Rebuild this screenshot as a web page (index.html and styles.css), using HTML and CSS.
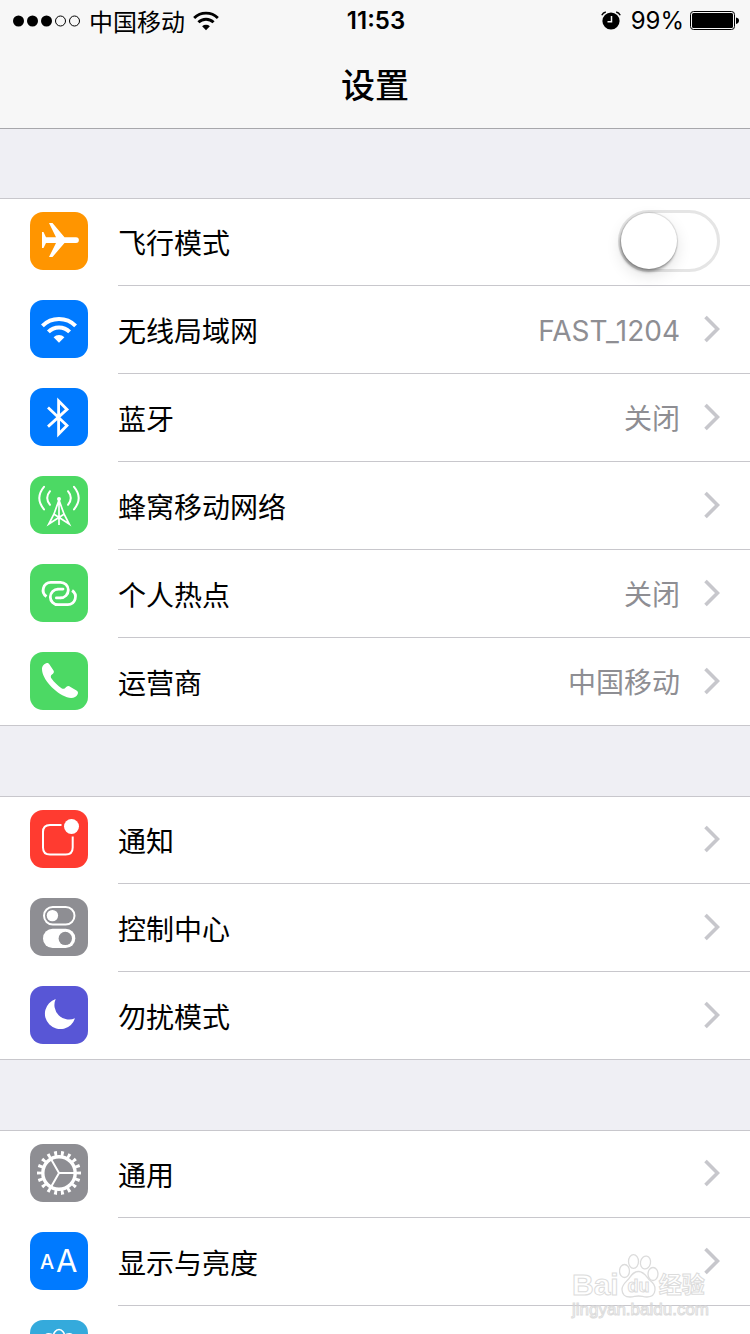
FILE: index.html
```html
<!DOCTYPE html>
<html lang="zh-CN">
<head>
<meta charset="utf-8">
<meta name="viewport" content="width=device-width, initial-scale=1">
<title>设置</title>
<link rel="stylesheet" href="styles.css">
</head>
<body>
<svg class="defs" aria-hidden="true">
  <symbol id="wifi" viewBox="11 16 36 28">
    <g fill="none" stroke="currentColor" stroke-width="4">
      <path d="M12.4 25.9a23.5 23.5 0 0 1 33.2 0"/>
      <path d="M18.4 31.9a15 15 0 0 1 21.2 0"/>
    </g>
    <path fill="currentColor" d="M29 42.8l-5.4-5.6a8 8 0 0 1 10.8 0z"/>
  </symbol>
  <symbol id="chevron" viewBox="0 0 16 28">
    <path d="M1.5 2L13.5 14L1.5 26" fill="none" stroke="currentColor" stroke-width="3.6"/>
  </symbol>
</svg>
<div class="screen">
  <header class="top">
    <div class="status">
      <div class="status-left">
        <svg width="68" height="12" viewBox="0 0 68 12" aria-hidden="true">
          <circle cx="5.5" cy="6" r="5.5"/><circle cx="19.5" cy="6" r="5.5"/><circle cx="33.5" cy="6" r="5.5"/>
          <circle class="ring" cx="47.5" cy="6" r="5"/><circle class="ring" cx="61.5" cy="6" r="5"/>
        </svg>
        <span class="carrier">中国移动</span>
        <svg width="26" height="20" aria-hidden="true"><use href="#wifi"/></svg>
      </div>
      <time class="clock">11:53</time>
      <div class="status-right">
        <svg class="alarm" width="20" height="19" viewBox="0 0 20 19" aria-hidden="true">
          <circle cx="10" cy="10" r="8.6"/>
          <path d="M.8 4.2Q2 1.6 4.8 1M19.2 4.2Q18 1.6 15.2 1" fill="none" stroke="#000" stroke-width="1.5"/>
          <path d="M10.5 5v5.8H6.500" fill="none" stroke="#f7f7f7" stroke-width="1.5"/>
        </svg>
        <span>99%</span>
        <svg width="49" height="20" viewBox="0 0 49 20" aria-hidden="true">
          <rect class="ring" x=".5" y=".5" width="44" height="18" rx="3"/>
          <rect x="2" y="2" width="41" height="15" rx="1.5"/>
          <path d="M46 6.5q3 .5 3 3t-3 3.500z"/>
        </svg>
      </div>
    </div>
    <h1 class="title">设置</h1>
  </header>

  <main class="groups">
    <ul class="group">
      <li class="row">
        <svg class="icon orange" viewBox="0 0 58 58" aria-hidden="true">
          <path fill="#fff" d="M12 20h1.500L16 25.200H26L19 11h3.500L34.500 25.200H46a2.800 2.800 0 0 1 0 5.800H34.500L22.500 45H19l7-14H16l-2.500 5H12z"/>
        </svg>
        <div class="body">
          <label class="label" for="airplane">飞行模式</label>
          <input class="switch" type="checkbox" role="switch" id="airplane">
        </div>
      </li>
      <li><a class="row" href="#">
        <svg class="icon blue" viewBox="0 0 58 58" aria-hidden="true"><use href="#wifi" x="11" y="16" width="36" height="28"/></svg>
        <span class="body"><span class="label">无线局域网</span><span class="value">FAST_1204</span><svg class="chevron" aria-hidden="true"><use href="#chevron"/></svg></span>
      </a></li>
      <li><a class="row" href="#">
        <svg class="icon blue" viewBox="0 0 58 58" aria-hidden="true">
          <path class="line" stroke-width="2.800" d="M18 19.600L37 37.500L28.600 46V13L37 21.400L18 38.600"/>
        </svg>
        <span class="body"><span class="label">蓝牙</span><span class="value">关闭</span><svg class="chevron" aria-hidden="true"><use href="#chevron"/></svg></span>
      </a></li>
      <li><a class="row" href="#">
        <svg class="icon green" viewBox="0 0 58 58" aria-hidden="true">
          <circle cx="29" cy="23" r="2" fill="#fff"/>
          <path class="line" stroke-width="1.700" d="M29 23V49M29 24L24 38L18.800 48L33.500 38.500M29 24L34 38L39.200 48L24.500 38.500"/>
          <path class="line round" stroke-width="2" d="M20 15.200q-5.600 6.800 0 13.600M38 15.200q5.600 6.800 0 13.600M14 10.800q-9.400 11.200 0 22.600M44 10.800q9.400 11.200 0 22.600"/>
        </svg>
        <span class="body"><span class="label">蜂窝移动网络</span><svg class="chevron" aria-hidden="true"><use href="#chevron"/></svg></span>
      </a></li>
      <li><a class="row" href="#">
        <svg class="icon green" viewBox="0 0 58 58" aria-hidden="true">
          <path class="line" stroke-width="2.800" d="M16.500 32.500A7.800 7.800 0 0 1 20.800 18.300H30.500a7.800 7.800 0 0 1 0 15.600"/>
          <path class="line" stroke-width="2.800" d="M42.100 26.500A7.800 7.800 0 0 1 37.800 40.700H28.100a7.800 7.800 0 0 1 0-15.600"/>
          <path class="line round" stroke-width="2.800" d="M30.500 33.900H26.400M28.100 25.100H33"/>
        </svg>
        <span class="body"><span class="label">个人热点</span><span class="value">关闭</span><svg class="chevron" aria-hidden="true"><use href="#chevron"/></svg></span>
      </a></li>
      <li><a class="row" href="#">
        <svg class="icon green" viewBox="0 0 58 58" aria-hidden="true">
          <path fill="#fff" d="M12 17C12 13.500 14.500 11.800 17 11C18 10.800 19 11.500 19.500 12.500L23.500 18.500C24.500 20 23.500 21.500 22 22.500C20.500 23.500 20.500 25 21.500 26.500C24 30 28 34 31.500 36.200C33 37.200 34 37 35.200 36L36.500 34.800C38 33.700 39 34 40.500 35L46.500 38.500C48 39.500 48.500 40.500 47.500 42.500C46 45.500 42 47 37 45.200C25 41 12 27 12 17Z"/>
        </svg>
        <span class="body"><span class="label">运营商</span><span class="value">中国移动</span><svg class="chevron" aria-hidden="true"><use href="#chevron"/></svg></span>
      </a></li>
    </ul>

    <ul class="group">
      <li><a class="row" href="#">
        <svg class="icon red" viewBox="0 0 58 58" aria-hidden="true">
          <path class="line" stroke-width="2" d="M31.500 15H20q-7 0-7 7V37.500q0 7 7 7H35.700q7 0 7-7V26.500"/>
          <circle cx="41.500" cy="16.500" r="7.500" fill="#fff"/>
        </svg>
        <span class="body"><span class="label">通知</span><svg class="chevron" aria-hidden="true"><use href="#chevron"/></svg></span>
      </a></li>
      <li><a class="row" href="#">
        <svg class="icon gray" viewBox="0 0 58 58" aria-hidden="true">
          <rect class="line" stroke-width="2" x="14" y="9" width="30.500" height="17.500" rx="8.750"/>
          <circle cx="22.400" cy="17.600" r="5.700" fill="#fff"/>
          <rect x="13" y="30.800" width="32.300" height="19.200" rx="9.600" fill="#fff"/>
          <circle cx="35.300" cy="40.400" r="6.700" fill="#8e8e93"/>
        </svg>
        <span class="body"><span class="label">控制中心</span><svg class="chevron" aria-hidden="true"><use href="#chevron"/></svg></span>
      </a></li>
      <li><a class="row" href="#">
        <svg class="icon purple" viewBox="0 0 58 58" aria-hidden="true">
          <path fill="#fff" d="M25.700 13A15.400 15.400 0 1 0 45 32.300A14.600 14.600 0 0 1 25.700 13Z"/>
        </svg>
        <span class="body"><span class="label">勿扰模式</span><svg class="chevron" aria-hidden="true"><use href="#chevron"/></svg></span>
      </a></li>
    </ul>

    <ul class="group">
      <li><a class="row" href="#">
        <svg class="icon gray" viewBox="0 0 58 58" aria-hidden="true">
          <circle class="line" cx="29" cy="29" r="16.200" stroke-width="3.400"/>
          <circle class="line" cx="29" cy="29" r="19.500" stroke-width="5" pathLength="180" stroke-dasharray="4.200 5.800" stroke-dashoffset="2.100"/>
          <path class="line" stroke-width="2" d="M29 29H45M29 29L21 15.100M29 29L21 42.900"/>
        </svg>
        <span class="body"><span class="label">通用</span><svg class="chevron" aria-hidden="true"><use href="#chevron"/></svg></span>
      </a></li>
      <li><a class="row" href="#">
        <svg class="icon blue" viewBox="0 0 58 58" aria-hidden="true">
          <text class="glyph-small" x="10" y="37">A</text>
          <text class="glyph-large" x="26" y="40">A</text>
        </svg>
        <span class="body"><span class="label">显示与亮度</span><svg class="chevron" aria-hidden="true"><use href="#chevron"/></svg></span>
      </a></li>
      <li><a class="row" href="#">
        <svg class="icon cyan" viewBox="0 0 58 58" aria-hidden="true">
          <g class="line" stroke-width="1.600">
            <ellipse cx="29" cy="18" rx="6" ry="8.500"/>
            <ellipse cx="29" cy="18" rx="6" ry="8.500" transform="rotate(45 29 29)"/>
            <ellipse cx="29" cy="18" rx="6" ry="8.500" transform="rotate(90 29 29)"/>
            <ellipse cx="29" cy="18" rx="6" ry="8.500" transform="rotate(135 29 29)"/>
            <ellipse cx="29" cy="18" rx="6" ry="8.500" transform="rotate(180 29 29)"/>
            <ellipse cx="29" cy="18" rx="6" ry="8.500" transform="rotate(225 29 29)"/>
            <ellipse cx="29" cy="18" rx="6" ry="8.500" transform="rotate(270 29 29)"/>
            <ellipse cx="29" cy="18" rx="6" ry="8.500" transform="rotate(315 29 29)"/>
          </g>
        </svg>
        <span class="body"></span>
      </a></li>
    </ul>
  </main>

  <div class="watermark">
    <div class="brand">
      <span class="brand-latin">Bai</span>
      <svg width="40" height="44" viewBox="0 0 40 44" aria-hidden="true">
        <g fill="#fff" fill-opacity=".8" stroke="#dcdcdc" stroke-width="1.300">
          <ellipse cx="5.500" cy="17" rx="5" ry="6.500"/>
          <ellipse cx="14.500" cy="7.500" rx="5" ry="6.800"/>
          <ellipse cx="26.500" cy="8.500" rx="5" ry="6.500" transform="rotate(12 26.500 8.500)"/>
          <ellipse cx="34" cy="20" rx="5" ry="6.500"/>
          <path d="M19.500 17.500C25 17.500 27 22 30 25.500C34 29 36.500 31 36 36C35.500 41 32 43 28 43C24 43 23 42 19.500 42C16 42 15 43 11 43C6 43 3 40 3 35.500C3 30.500 7 28 10 24.500C12.500 21 14.500 17.500 19.500 17.500Z"/>
        </g>
        <text class="brand-du" x="19.500" y="38" text-anchor="middle">du</text>
      </svg>
      <span class="brand-han">经验</span>
    </div>
    <div class="site">jingyan.baidu.com</div>
  </div>
</div>
</body>
</html>
```

FILE: styles.css
```css
* {
  box-sizing: border-box;
}

body {
  margin: 0;
  background: #efeff4;
  color: #000;
  font-family: Inter, "Noto Sans CJK SC", sans-serif;
}

.defs {
  position: absolute;
  width: 0;
  height: 0;
}

.screen {
  position: relative;
  height: 100vh;
  overflow: hidden;
}

/* Status bar and title */
.top {
  height: 128px;
  background: #f7f7f7;
  box-shadow: 0 1px #a7a7ab;
}

.status {
  display: grid;
  grid-template-columns: 1fr auto 1fr;
  align-items: center;
  height: 41px;
  padding: 0 11px 0 13px;
  font-size: 24px;
  line-height: 41px;
}

.status-left,
.status-right {
  display: flex;
  align-items: center;
}

.status-left {
  gap: 8px;
}

.status-right {
  justify-content: flex-end;
  gap: 6px;
}

.alarm {
  margin-right: 4px;
}

.carrier {
  font-family: "Noto Sans CJK SC", sans-serif;
  line-height: 38px;
}

.clock {
  font-weight: 600;
}

.ring {
  fill: none;
  stroke: #000;
}

.title {
  margin: 0;
  font-family: "Noto Sans CJK SC", sans-serif;
  font-size: 34px;
  font-weight: 500;
  line-height: 85px;
  text-align: center;
}

/* Grouped list */
.groups {
  display: flex;
  flex-direction: column;
  gap: 70px;
  padding-top: 70px;
}

.group {
  margin: 0;
  padding: 0;
  list-style: none;
  background: #fff;
  box-shadow: inset 0 1px #c8c7cc, inset 0 -1px #c8c7cc;
}

.row {
  display: flex;
  gap: 30px;
  height: 88px;
  padding-left: 30px;
  color: inherit;
  text-decoration: none;
}

.icon {
  flex: none;
  width: 58px;
  height: 58px;
  margin-top: 14px;
  border-radius: 13px;
  color: #fff;
}

.orange { background: #ff9500; }
.blue { background: #007aff; }
.green { background: #4cd964; }
.red { background: #ff3b30; }
.gray { background: #8e8e93; }
.purple { background: #5856d6; }
.cyan { background: #34aadc; }

.line {
  fill: none;
  stroke: #fff;
}

.round {
  stroke-linecap: round;
}

.glyph-small,
.glyph-large {
  fill: #fff;
  font-family: Inter, sans-serif;
}

.glyph-small {
  font-size: 20px;
  font-weight: 500;
}

.glyph-large {
  font-size: 31px;
}

.body {
  display: flex;
  flex: 1;
  align-items: center;
  padding: 0 30px 2px 0;
  border-bottom: 1px solid #c8c7cc;
  font-size: 28px;
  line-height: 40px;
}

.group > :last-child .body {
  border-bottom-color: transparent;
}

.label {
  flex: 1;
  padding-top: 6px;
}

.value {
  padding-top: 5px;
  color: #8e8e93;
}

.chevron {
  flex: none;
  width: 16px;
  height: 28px;
  margin-left: 24px;
  color: #c7c7cc;
}

.switch {
  appearance: none;
  width: 102px;
  height: 62px;
  margin: 0;
  border: 3px solid #e5e5e5;
  border-radius: 31px;
  background: #fff;
}

.switch::before {
  content: "";
  display: block;
  width: 56px;
  height: 56px;
  border-radius: 50%;
  background: #fff;
  box-shadow: 0 0 1px 1px rgba(0, 0, 0, 0.12), -1px 3px 3px rgba(0, 0, 0, 0.3), 0 6px 16px rgba(0, 0, 0, 0.12);
}

.switch:checked {
  border-color: #4cd964;
  background: #4cd964;
}

.switch:checked::before {
  margin-left: 40px;
}

/* Overlay mark */
.watermark {
  position: absolute;
  right: 41px;
  bottom: 14px;
  color: rgba(255, 255, 255, 0.8);
  font-family: "Liberation Sans", "Noto Sans CJK SC", sans-serif;
  -webkit-text-stroke: 1px #dcdcdc;
  pointer-events: none;
}

.brand {
  display: flex;
  align-items: flex-end;
  height: 44px;
}

.brand-latin,
.brand-han {
  font-weight: 700;
  line-height: 26px;
}

.brand-latin {
  font-size: 30px;
}

.brand-han {
  font-size: 23px;
}

.brand-du {
  fill: #fff;
  stroke: #dcdcdc;
  font-size: 18px;
  font-weight: 700;
}

.site {
  padding-top: 2px;
  font-size: 17px;
  line-height: 20px;
}
```
